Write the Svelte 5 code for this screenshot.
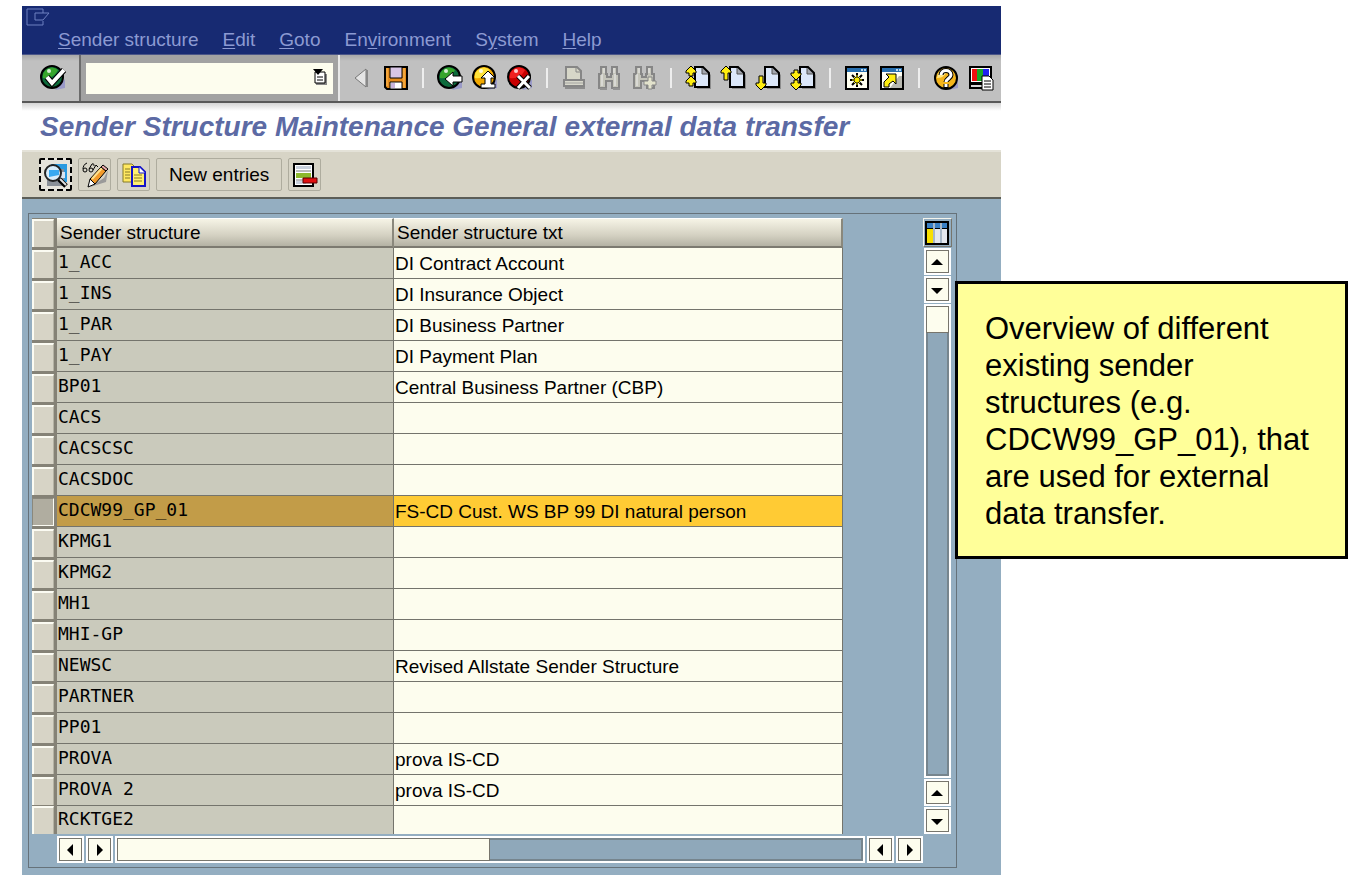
<script>
  const menus = [
    { before: '', key: 'S', after: 'ender structure' },
    { before: '', key: 'E', after: 'dit' },
    { before: '', key: 'G', after: 'oto' },
    { before: 'En', key: 'v', after: 'ironment' },
    { before: 'S', key: 'y', after: 'stem' },
    { before: '', key: 'H', after: 'elp' }
  ]

  const toolGroups = [
    [{ icon: 'save', label: 'Save' }],
    [
      { icon: 'back', label: 'Back' },
      { icon: 'exit', label: 'Exit' },
      { icon: 'cancel', label: 'Cancel' }
    ],
    [
      { icon: 'print', label: 'Print', disabled: true },
      { icon: 'find', label: 'Find', disabled: true },
      { icon: 'findnext', label: 'Find next', disabled: true }
    ],
    [
      { icon: 'first', label: 'First page' },
      { icon: 'prev', label: 'Previous page' },
      { icon: 'next', label: 'Next page' },
      { icon: 'last', label: 'Last page' }
    ],
    [
      { icon: 'session', label: 'Create session' },
      { icon: 'shortcut', label: 'Create shortcut' }
    ],
    [
      { icon: 'help', label: 'Help' },
      { icon: 'layout', label: 'Customize local layout' }
    ]
  ]

  const rows = [
    { id: '1_ACC', text: 'DI Contract Account' },
    { id: '1_INS', text: 'DI Insurance Object' },
    { id: '1_PAR', text: 'DI Business Partner' },
    { id: '1_PAY', text: 'DI Payment Plan' },
    { id: 'BP01', text: 'Central Business Partner (CBP)' },
    { id: 'CACS', text: '' },
    { id: 'CACSCSC', text: '' },
    { id: 'CACSDOC', text: '' },
    { id: 'CDCW99_GP_01', text: 'FS-CD Cust. WS BP 99 DI natural person' },
    { id: 'KPMG1', text: '' },
    { id: 'KPMG2', text: '' },
    { id: 'MH1', text: '' },
    { id: 'MHI-GP', text: '' },
    { id: 'NEWSC', text: 'Revised Allstate Sender Structure' },
    { id: 'PARTNER', text: '' },
    { id: 'PP01', text: '' },
    { id: 'PROVA', text: 'prova IS-CD' },
    { id: 'PROVA 2', text: 'prova IS-CD' },
    { id: 'RCKTGE2', text: '' }
  ]

  let command = $state('')
  let selected = $state('CDCW99_GP_01')
</script>

{#snippet page()}
  <path d="M12 4h8l6 6v14h-14z" fill="#8c8c8c"/>
  <path d="M10 2h9l5 6v14h-14z" fill="#dce8fa"/>
  <path d="M17 2l7 7h-7z" fill="#a4a8b0"/>
  <path d="M10 2h8l6 6v14h-14z" fill="none" stroke="#000" stroke-width="2"/>
  <path d="M17 3v6h6" fill="none" stroke="#555" stroke-width="1"/>
{/snippet}

{#snippet up(y, len)}
  <path d="M6 {y}l5 5v2h-3v{len}h-4v-{len}h-3v-2z" fill="#ffee10" stroke="#000" stroke-width="1"/>
{/snippet}

{#snippet down(y, len)}
  <path d="M6 {y}l5 -5v-2h-3v-{len}h-4v{len}h-3v2z" fill="#ffee10" stroke="#000" stroke-width="1"/>
{/snippet}

{#snippet ball(fill, shine)}
  <path d="M15 25l10-2v-9z" fill="#9a9ac8"/>
  <circle cx="12" cy="12" r="11" {fill} stroke="#000" stroke-width="2"/>
  <path d="M3 13a9 9 0 0 1 15-8c-3 6-8 9-15 8z" fill={shine}/>
  <circle cx="9" cy="6" r="2" fill="#fff" opacity="0.8"/>
{/snippet}

{#snippet icon(name)}
  <svg viewBox="0 0 26 26" width="26" height="26" aria-hidden="true">
    {#if name === 'ok'}
      {@render ball('#0d6b3c', '#37a52c')}
      <path d="M7 12l5 6 12-13" fill="none" stroke="#000" stroke-width="6"/>
      <path d="M7 12l5 6 12-13" fill="none" stroke="#fff" stroke-width="4"/>
    {:else if name === 'save'}
      <path d="M2 2h22v22h-20l-2-2z" fill="#e58a1c" stroke="#000" stroke-width="2"/>
      <path d="M7 2h12v11h-12z" fill="#d9c6e6" stroke="#000" stroke-width="1"/>
      <path d="M7 24v-7h12v7z" fill="#fff" stroke="#000" stroke-width="1"/>
      <path d="M8 18h4v5h-4z" fill="#c9b4dc"/>
      <path d="M4 3v18M21 3v20" stroke="#ffc25c" stroke-width="1"/>
    {:else if name === 'back'}
      {@render ball('#0d6b3c', '#37a52c')}
      <path d="M8 14l8-7v4h9v6h-9v4z" fill="#fff" stroke="#000" stroke-width="1"/>
    {:else if name === 'exit'}
      {@render ball('#f2a900', '#ffe23a')}
      <path d="M16 6l7 7h-4v6h4v4h-14v-4h4v-6h-4z" fill="#fff" stroke="#000" stroke-width="1"/>
    {:else if name === 'cancel'}
      {@render ball('#c80000', '#f02020')}
      <path d="M11 11l12 12M22 11l-11 12" stroke="#000" stroke-width="5"/>
      <path d="M11 11l12 12M22 11l-11 12" stroke="#fff" stroke-width="3"/>
    {:else if name === 'print'}
      <path d="M5 15v-13h11l4 4v9z" fill="#d6d6c8" stroke="#868686" stroke-width="2"/>
      <path d="M15 3v4h4" fill="none" stroke="#868686" stroke-width="1"/>
      <path d="M3 15h20v6h-20z" fill="#d8d8cc" stroke="#868686" stroke-width="2"/>
      <path d="M4 18h18" stroke="#a4a4a0" stroke-width="1"/>
      <path d="M4 23h20" stroke="#8c8c8c" stroke-width="2"/>
    {:else if name === 'find'}
      <path d="M3 9h2v-7h5v7h1v3h4v-3h1v-7h5v7h2v14h-7v-7h-6v7h-7z" fill="#c4c4ba" stroke="#868686" stroke-width="2"/>
      <path d="M6 9v12M19 9v12M8 3v5M18 3v5" stroke="#eee" stroke-width="1"/>
      <path d="M4 24h7M17 24h7" stroke="#929292" stroke-width="2"/>
    {:else if name === 'findnext'}
      <path d="M3 9h2v-7h5v7h1v3h4v-3h1v-7h5v7h2v14h-7v-7h-6v7h-7z" fill="#c4c4ba" stroke="#868686" stroke-width="2"/>
      <path d="M6 9v12M8 3v5M18 3v5" stroke="#eee" stroke-width="1"/>
      <path d="M17 12h4v4h4v4h-4v4h-4v-4h-4v-4h4z" fill="#e2e2cc" stroke="#868686" stroke-width="1"/>
    {:else if name === 'first'}
      {@render page()}
      {@render up(1, 3)}
      {@render up(11, 3)}
    {:else if name === 'prev'}
      {@render page()}
      {@render up(1, 7)}
    {:else if name === 'next'}
      {@render page()}
      {@render down(25, 7)}
    {:else if name === 'last'}
      {@render page()}
      {@render down(15, 3)}
      {@render down(25, 3)}
    {:else if name === 'session'}
      <path d="M1 1h24v24h-24z" fill="#000"/>
      <path d="M3 3h20v4h-20z" fill="#2870b0"/>
      <path d="M17 4h2v2h-2zM20 4h2v2h-2z" fill="#bcd8f0"/>
      <path d="M3 7h20v16h-20z" fill="#fffff0"/>
      <path d="M13 8v14M6 15h14M8 10l10 10M18 10l-10 10" stroke="#000" stroke-width="2"/>
      <path d="M13 10v10M8 15h10M10 12l6 6M16 12l-6 6" stroke="#f8ec00" stroke-width="1"/>
      <path d="M11 13h4v4h-4z" fill="#f8ec00"/>
    {:else if name === 'shortcut'}
      <path d="M1 1h24v24h-24z" fill="#000"/>
      <path d="M3 3h20v4h-20z" fill="#2870b0"/>
      <path d="M17 4h2v2h-2zM20 4h2v2h-2z" fill="#bcd8f0"/>
      <path d="M3 7h20v16h-20z" fill="#fffff4"/>
      <path d="M11 23l9-12h3v12z" fill="#b8b8b0"/>
      <path d="M5 22v-5l5-5-3-3h10v10l-3-3-4 3v3z" fill="#ffee10" stroke="#000" stroke-width="1"/>
    {:else if name === 'help'}
      <path d="M15 25l10-2v-9z" fill="#9a9ac8"/>
      <circle cx="13" cy="13" r="11" fill="#f4b51c" stroke="#000" stroke-width="2"/>
      <path d="M4 13a9 9 0 0 1 10-9c-1 6-4 9-10 9z" fill="#ffe88a"/>
      <path d="M8 10c0-6 10-6 10 0 0 3-5 4-5 7M13 19v4" fill="none" stroke="#000" stroke-width="5"/>
      <path d="M8 10c0-6 10-6 10 0 0 3-5 4-5 7M13 19v3" fill="none" stroke="#fff" stroke-width="3"/>
    {:else if name === 'layout'}
      <path d="M2 2h21v16h-21z" fill="#fff" stroke="#000" stroke-width="2"/>
      <path d="M4 4h5v12h-5z" fill="#f01010"/>
      <path d="M9 4h6v12h-6z" fill="#18a828"/>
      <path d="M15 4h6v12h-6z" fill="#2020f0"/>
      <path d="M2 19h13v4h-13z" fill="#d8d8d8" stroke="#000" stroke-width="2"/>
      <path d="M14 11h7l4 4v10h-11z" fill="#fff" stroke="#000" stroke-width="1"/>
      <path d="M16 16h7M16 19h7M16 22h7" stroke="#000" stroke-width="1"/>
    {:else if name === 'details'}
      <path d="M8 2h16v18h-16z" fill="#2a9ae0"/>
      <path d="M4 7h17v17h-17z" fill="#8a9098"/>
      <path d="M15 10h7v6h-7z" fill="#d8e4f0"/>
      <path d="M16 17l7 7" stroke="#000" stroke-width="5"/>
      <path d="M17 17l6 6" stroke="#e0e0e0" stroke-width="2"/>
      <circle cx="10" cy="11" r="8" fill="#d8ecfa" stroke="#222" stroke-width="2"/>
      <path d="M6 8h10v5l-10 2z" fill="#38a8f0"/>
    {:else if name === 'toggle'}
      <g fill="none" stroke="#000" stroke-width="1">
        <path d="M5 1c-3 1-4 4-4 6"/>
        <circle cx="3" cy="8" r="2"/>
        <circle cx="9" cy="8" r="2"/>
        <path d="M7 7l3-5c2-1 2 1 2 2M11 8l3-5 2 2"/>
      </g>
      <path d="M8 25l14-9 4-8-2 12z" fill="#9a9a9a"/>
      <path d="M8 17l11-12 5 4-11 13z" fill="#f29a2a" stroke="#000" stroke-width="1"/>
      <path d="M10 17l10-11" stroke="#ffe08a" stroke-width="2"/>
      <path d="M19 5l2-2 5 4-2 2z" fill="#e8a8a8" stroke="#000" stroke-width="1"/>
      <path d="M8 17l5 5-7 3z" fill="#fff" stroke="#000" stroke-width="1"/>
    {:else if name === 'copy'}
      <path d="M2 2h9l4 4v14h-13z" fill="#ffe860" stroke="#857a28" stroke-width="1"/>
      <path d="M4 7h5M4 10h5M4 13h5M4 16h5" stroke="#857a28" stroke-width="1"/>
      <path d="M11 5h8l5 5v14h-13z" fill="#fff070" stroke="#1414c8" stroke-width="2"/>
      <path d="M18 5v6h6" fill="#fff" stroke="#1414c8" stroke-width="1"/>
      <path d="M13 13h8M13 16h8M13 19h8" stroke="#8a7d20" stroke-width="1"/>
    {:else if name === 'delete'}
      <path d="M2 2h19v22h-19z" fill="#fff" stroke="#000" stroke-width="2"/>
      <path d="M4 4h15v3h-15z" fill="#c8d0dc"/>
      <path d="M4 11h15v5h-15z" fill="#8cb82c"/>
      <path d="M4 19h10v3h-10z" fill="#c8d0dc"/>
      <path d="M4 9h15M4 18h10" stroke="#777" stroke-width="1"/>
      <path d="M11 16h14v5h-14z" fill="#e01010" stroke="#5a0000" stroke-width="1"/>
    {:else if name === 'columns'}
      <path d="M1 1h24v24h-24z" fill="#000"/>
      <path d="M3 3h20v5h-20z" fill="#3a80c4"/>
      <path d="M3 9h6v14h-6z" fill="#f8e000"/>
      <path d="M11 9h5v14h-5zM18 9h5v14h-5z" fill="#e4e8ee"/>
      <path d="M10 3v20M17 3v20" stroke="#a8b8c8" stroke-width="2"/>
    {/if}
  </svg>
{/snippet}

{#snippet arrow(dir, label)}
  <button class="arrow" aria-label={label}>
    <svg viewBox="0 0 20 20" width="20" height="20" aria-hidden="true">
      {#if dir === 'up'}
        <path d="M4 13l6-6 6 6z"/>
      {:else if dir === 'down'}
        <path d="M4 8h12l-6 6z"/>
      {:else if dir === 'left'}
        <path d="M13 4v12l-6-6z"/>
      {:else}
        <path d="M8 4v12l6-6z"/>
      {/if}
    </svg>
  </button>
{/snippet}

<div class="screen">
  <main class="window">
    <header class="titlebar">
      <button class="sysmenu" aria-label="Window menu">
        <svg viewBox="0 0 26 18" width="26" height="18" fill="none" stroke="#6f80c0" stroke-width="1">
          <path d="M17 5v-4h-16v16h16v-4"/>
          <path d="M9 5h14l-6 7h-8z"/>
        </svg>
      </button>
      <nav class="menubar">
        {#each menus as menu}
          <button>{menu.before}<u>{menu.key}</u>{menu.after}</button>
        {/each}
      </nav>
    </header>

    <div class="toolbar">
      <button class="enter" aria-label="Enter">{@render icon('ok')}</button>
      <div class="command">
        <input type="text" aria-label="Command" bind:value={command} />
        <button class="history" aria-label="Command history">
          <svg viewBox="0 0 16 18" width="16" height="18">
            <path d="M4 6h11v11h-11z" fill="#888"/>
            <path d="M3 4h10v11h-10z" fill="#fff" stroke="#000" stroke-width="1"/>
            <path d="M5 9h6M5 12h6" stroke="#000" stroke-width="1"/>
            <path d="M1 1h10l-5 6z"/>
          </svg>
        </button>
      </div>
      <button class="collapse" aria-label="Hide command field">
        <svg viewBox="0 0 16 22" width="16" height="22">
          <path d="M13 2v18l-11-9z" fill="#e4e4e4" stroke="#777" stroke-width="1"/>
          <path d="M14 3v17" stroke="#888" stroke-width="2"/>
        </svg>
      </button>
      {#each toolGroups as group, i}
        {#if i > 0}<span class="sep"></span>{/if}
        <div class="group">
          {#each group as tool}
            <button aria-label={tool.label} disabled={tool.disabled}>{@render icon(tool.icon)}</button>
          {/each}
        </div>
      {/each}
    </div>

    <h1>Sender Structure Maintenance General external data transfer</h1>

    <div class="actions">
      <button class="focused" aria-label="Details">{@render icon('details')}</button>
      <button aria-label="Display / change">{@render icon('toggle')}</button>
      <button aria-label="Copy as">{@render icon('copy')}</button>
      <button class="wide">New entries</button>
      <button aria-label="Delete">{@render icon('delete')}</button>
    </div>

    <section class="content">
      <div class="frame">
        <table>
          <thead>
            <tr>
              <th class="pick"><button aria-label="Select all"></button></th>
              <th class="key">Sender structure</th>
              <th>Sender structure txt</th>
            </tr>
          </thead>
          <tbody>
            {#each rows as row}
              <tr class:selected={row.id === selected}>
                <td class="pick">
                  <button aria-label="Select {row.id}" onclick={() => (selected = row.id)}></button>
                </td>
                <td class="key">{row.id}</td>
                <td class="text">{row.text}</td>
              </tr>
            {/each}
          </tbody>
        </table>

        <div class="vscroll">
          <button class="config" aria-label="Configuration">{@render icon('columns')}</button>
          {@render arrow('up', 'Line up')}
          {@render arrow('down', 'Page down')}
          <div class="track"><div class="thumb"></div></div>
          {@render arrow('up', 'Page up')}
          {@render arrow('down', 'Line down')}
        </div>

        <div class="hscroll">
          {@render arrow('left', 'Column left')}
          {@render arrow('right', 'Column right')}
          <div class="track"><div class="thumb"></div></div>
          {@render arrow('left', 'Page left')}
          {@render arrow('right', 'Page right')}
        </div>
      </div>
    </section>
  </main>

  <aside class="note">
    Overview of different existing sender structures (e.g. CDCW99_GP_01), that are used for external data transfer.
  </aside>
</div>

<style>
  :global(body) {
    margin: 0;
    background: #fff;
  }

  .screen {
    display: flex;
    align-items: flex-start;
    padding: 6px 6px 3px 22px;
    font-family: "Liberation Sans", Arial, sans-serif;
    font-size: 19px;
    line-height: 24px;
    color: #000;
  }

  button {
    margin: 0;
    padding: 0;
    border: 0;
    background: none;
    font: inherit;
    color: inherit;
  }

  svg { display: block; }

  .window {
    flex: 1;
    min-width: 0;
    background: #94aec1;
  }

  .titlebar {
    height: 48px;
    background: #172a72;
    border-bottom: 1px solid #4a5588;
  }

  .sysmenu {
    display: block;
    padding: 2px 0 0 4px;
  }

  .menubar {
    display: flex;
    gap: 24px;
    padding: 2px 36px;
    color: #8c9ad2;
  }

  .menubar u { text-underline-offset: 2px; }

  .toolbar {
    display: flex;
    align-items: center;
    height: 46px;
    background: linear-gradient(#a8a8a8, #c0c0c0 6px);
    border-bottom: 2px solid #585858;
  }

  .enter { padding: 0 13px 0 18px; }

  .command {
    align-self: stretch;
    display: flex;
    align-items: center;
    width: 261px;
    box-sizing: border-box;
    padding: 0 5px;
    background: #a2a2a2;
    border-left: 2px solid #6c6c6c;
    border-right: 2px solid #e8e8e8;
  }

  .command input {
    flex: 1;
    min-width: 0;
    height: 31px;
    box-sizing: border-box;
    border: 0;
    padding: 0 4px;
    background: #fdfdee;
    font: inherit;
  }

  .history {
    height: 31px;
    padding: 0 5px 2px;
    background: #fdfdee;
  }

  .collapse { padding: 0 14px 0 13px; }

  .group {
    display: flex;
    gap: 9px;
  }

  .sep {
    width: 2px;
    height: 20px;
    margin: 0 13px;
    background: #eee;
  }

  h1 {
    margin: 0;
    padding: 8px 18px 7px;
    background: linear-gradient(#d4d4d4, #fff 8px);
    font-size: 28px;
    line-height: 32px;
    font-weight: bold;
    font-style: italic;
    color: #5c6aa4;
    border-bottom: 2px solid #e4e2d8;
  }

  .actions {
    display: flex;
    gap: 6px;
    padding: 6px 17px;
    background: #d7d4c6;
    border-bottom: 2px solid #5c5e58;
  }

  .actions button {
    display: flex;
    align-items: center;
    justify-content: center;
    width: 33px;
    height: 33px;
    box-sizing: border-box;
    border: 1px solid #aeac9e;
    border-radius: 2px;
  }

  .actions .wide {
    width: auto;
    padding: 0 12px;
  }

  .actions .focused {
    border: 2px dashed #000;
    background: #e6e4dc;
  }

  .content { padding: 14px 44px 7px 6px; }

  .frame {
    display: grid;
    grid-template-columns: minmax(0, 1fr) 29px;
    row-gap: 2px;
    padding: 4px 4px 4px 3px;
    border: 1px solid #66727a;
  }

  table {
    width: 91%;
    table-layout: fixed;
    border-collapse: separate;
    border-spacing: 0;
  }

  th,
  td {
    height: 31px;
    box-sizing: border-box;
    padding: 2px 1px 0;
    text-align: left;
    font-weight: normal;
    white-space: nowrap;
    border-right: 1px solid #74746c;
    border-bottom: 1px solid #74746c;
  }

  th {
    height: 30px;
    padding: 0 3px;
    background: linear-gradient(#f6f4e6, #d4d1c2 60%, #b4b2a4);
    border-right: 2px solid #8a887c;
    border-bottom: 2px solid #7c7a70;
    border-top: 1px solid #fff;
  }

  .key { width: 337px; }

  td.key {
    padding: 0 1px 2px;
    background: #cacabc;
    font-family: "DejaVu Sans Mono", monospace;
    font-size: 18px;
  }

  .text { background: #fdfdee; }

  .pick {
    width: 25px;
    padding: 0;
    background: #858276;
    border: 0;
  }

  .pick button {
    display: block;
    width: 22px;
    height: 28px;
    box-sizing: border-box;
    background: #d7d4c6;
    border-top: 2px solid #fbfbf2;
    border-left: 2px solid #fbfbf2;
    border-right: 1px solid #b4b2a4;
  }

  .selected .pick button {
    background: #b0ada0;
    border: 1px solid #8a887c;
    border-right-color: #fbfbf2;
    border-bottom-color: #fbfbf2;
  }

  .selected .key { background: #c29c48; }
  .selected .text { background: #ffcb34; }

  /* the last line is cut off by the scroll area */
  tbody tr:last-child td {
    height: 28px;
    border-bottom: 0;
  }

  .vscroll {
    display: flex;
    flex-direction: column;
    align-items: center;
    gap: 1px;
  }

  .config {
    width: 29px;
    height: 29px;
    box-sizing: border-box;
    border: 1px solid #f4f4ec;
    border-right-color: #77756c;
    border-bottom-color: #77756c;
  }

  .arrow {
    flex: none;
    width: 27px;
    height: 27px;
    box-sizing: border-box;
    padding: 1px;
    border: 2px solid #fff;
    background: #fdfdee;
    box-shadow: inset 0 0 0 1px #77756c;
  }

  .track {
    flex: 1;
    display: flex;
    box-sizing: border-box;
    border: 2px solid #fff;
    background: #8fa8ba;
    box-shadow: inset 0 0 0 2px #76858e;
  }

  .thumb {
    box-sizing: border-box;
    background: #fdfdee;
    border: 1px solid #77756c;
  }

  .vscroll .track { width: 27px; }

  .vscroll .thumb {
    width: 100%;
    height: 27px;
  }

  .hscroll {
    display: flex;
    gap: 2px;
    padding-left: 25px;
  }

  .hscroll .track { height: 27px; }
  .hscroll .thumb { width: 50%; }

  .note {
    flex: none;
    position: relative;
    width: 393px;
    box-sizing: border-box;
    margin: 275px 0 0 -46px;
    padding: 26px 24px 24px 27px;
    background: #ffff99;
    border: 3px solid #000;
    font-size: 31px;
    line-height: 37px;
  }
</style>
